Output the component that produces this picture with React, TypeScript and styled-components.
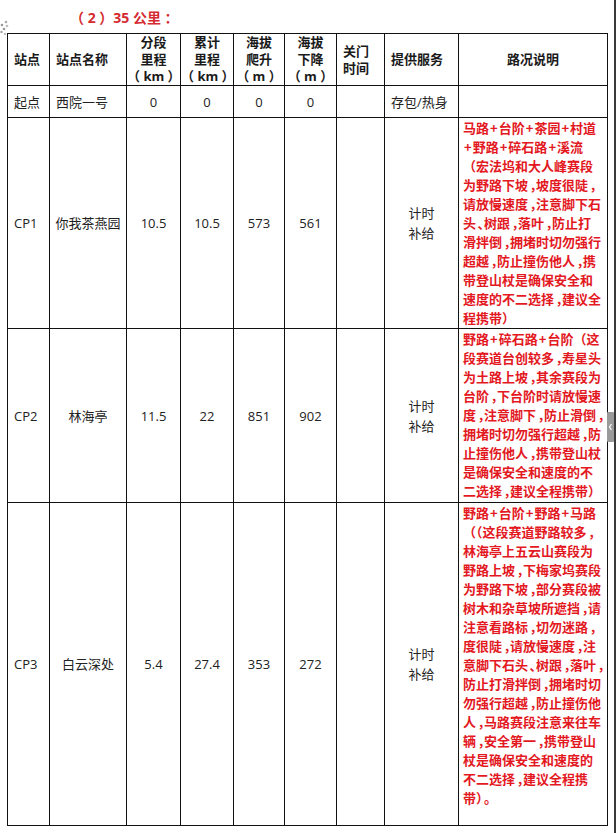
import React from "react";
import styled, { createGlobalStyle } from "styled-components";

const GlobalStyle = createGlobalStyle`
  html, body { margin: 0; padding: 0; background: #fff; }
  body { font-family: "Open Sans", "Noto Sans CJK SC", sans-serif; }
`;

const Page = styled.div`
  position: relative;
  box-sizing: border-box;
  width: 616px;
  height: 833px;
  border-right: 2px solid #3a3a3a;
  overflow: hidden;
`;

const TitleBar = styled.div`
  height: 33px;
  display: flex;
  align-items: center;
  padding-left: 70px;
  font-family: "Open Sans", "Noto Sans CJK SC", sans-serif;
  font-weight: 700;
  font-size: 14px;
  color: #d42a30;
  white-space: pre;
`;

const Dots = styled.svg`
  position: absolute;
  left: 0;
  top: 20px;
`;

const ScrollTab = styled.svg`
  position: absolute;
  right: 0;
  top: 412px;
`;

const Table = styled.table`
  margin-left: 7px;
  border-collapse: collapse;
  table-layout: fixed;
  width: 600px;
  border: 1.5px solid #111;
  font-size: 13px;
  color: #222;
`;

const Row = styled.tr<{ $h: number }>`
  height: ${(p) => p.$h}px;
`;

const Th = styled.th<{ $align?: string }>`
  border: 1px solid #111;
  padding: ${(p) => (p.$align === "left" ? "0 0 0 6px" : "0")};
  text-align: ${(p) => p.$align || "center"};
  vertical-align: middle;
  font-family: "Open Sans", "Noto Sans CJK SC", sans-serif;
  font-weight: 700;
  font-size: 13px;
  line-height: 17px;
  color: #1a1a1a;
`;

const Td = styled.td<{ $align?: string }>`
  border: 1px solid #111;
  padding: ${(p) => (p.$align === "left" ? "0 0 0 6px" : "0")};
  text-align: ${(p) => p.$align || "center"};
  vertical-align: middle;
  font-weight: 400;
  line-height: 20px;
`;

const Desc = styled.td`
  border: 1px solid #111;
  padding: 0 0 0 4px;
  vertical-align: top;
  font-family: "Noto Sans CJK SC", sans-serif;
  font-weight: 700;
  font-size: 13px;
  line-height: 19px;
  color: #e3191f;
`;

const Line = styled.span`
  display: block;
  white-space: nowrap;
`;

const Punct = styled.span`
  font-feature-settings: "halt";
  padding-left: 1.5px;
`;

const Plus = styled.span`
  padding: 0 1px;
`;

const Stack = styled.span`
  display: block;
  white-space: pre;
`;

const cols = [42, 77, 54, 53, 51, 52, 48, 74, 149];

type RowData = {
  id: string;
  name: string;
  seg: string;
  total: string;
  up: string;
  down: string;
  h: number;
  lines: string[];
};

const rows: RowData[] = [
  {
    id: "CP1",
    name: "你我茶燕园",
    seg: "10.5",
    total: "10.5",
    up: "573",
    down: "561",
    h: 211,
    lines: [
      "马路+台阶+茶园+村道",
      "+野路+碎石路+溪流",
      "（宏法坞和大人峰赛段",
      "为野路下坡，坡度很陡，",
      "请放慢速度，注意脚下石",
      "头、树跟，落叶，防止打",
      "滑拌倒，拥堵时切勿强行",
      "超越，防止撞伤他人，携",
      "带登山杖是确保安全和",
      "速度的不二选择，建议全",
      "程携带）",
    ],
  },
  {
    id: "CP2",
    name: "林海亭",
    seg: "11.5",
    total: "22",
    up: "851",
    down: "902",
    h: 174,
    lines: [
      "野路+碎石路+台阶（这",
      "段赛道台创较多，寿星头",
      "为土路上坡，其余赛段为",
      "台阶，下台阶时请放慢速",
      "度，注意脚下，防止滑倒，",
      "拥堵时切勿强行超越，防",
      "止撞伤他人，携带登山杖",
      "是确保安全和速度的不",
      "二选择，建议全程携带）",
    ],
  },
  {
    id: "CP3",
    name: "白云深处",
    seg: "5.4",
    total: "27.4",
    up: "353",
    down: "272",
    h: 323,
    lines: [
      "野路+台阶+野路+马路",
      "（（这段赛道野路较多，",
      "林海亭上五云山赛段为",
      "野路上坡，下梅家坞赛段",
      "为野路下坡，部分赛段被",
      "树木和杂草坡所遮挡，请",
      "注意看路标，切勿迷路，",
      "度很陡，请放慢速度，注",
      "意脚下石头、树跟，落叶，",
      "防止打滑拌倒，拥堵时切",
      "勿强行超越，防止撞伤他",
      "人，马路赛段注意来往车",
      "辆，安全第一，携带登山",
      "杖是确保安全和速度的",
      "不二选择，建议全程携",
      "带）。",
    ],
  },
];

function renderLine(s: string) {
  const out: React.ReactNode[] = [];
  let buf = "";
  const flush = (k: number) => {
    if (buf) {
      out.push(<React.Fragment key={"t" + k}>{buf}</React.Fragment>);
      buf = "";
    }
  };
  Array.from(s).forEach((ch, i) => {
    if (ch === "，" || ch === "、" || ch === "。") {
      flush(i);
      out.push(<Punct key={i}>{ch}</Punct>);
    } else if (ch === "+") {
      flush(i);
      out.push(<Plus key={i}>+</Plus>);
    } else {
      buf += ch;
    }
  });
  flush(s.length + 1);
  return out;
}

export default function App() {
  return (
    <>
      <GlobalStyle />
      <Page lang="zh-CN">
        <Dots width="10" height="18" viewBox="0 0 10 18">
          <circle cx="6" cy="2" r="1.3" fill="#aaa" />
          <circle cx="2" cy="5" r="1.3" fill="#999" />
          <circle cx="7" cy="6" r="1.3" fill="#bbb" />
          <circle cx="4" cy="9" r="1.3" fill="#999" />
          <circle cx="1.5" cy="12" r="1.3" fill="#aaa" />
          <circle cx="5" cy="14" r="1.2" fill="#bbb" />
        </Dots>
        <TitleBar>{"（ 2 ）35 公里 ："}</TitleBar>
        <Table>
          <colgroup>
            {cols.map((w, i) => (
              <col key={i} style={{ width: w }} />
            ))}
          </colgroup>
          <thead>
            <Row $h={52}>
              <Th $align="left">站点</Th>
              <Th $align="left">站点名称</Th>
              <Th>
                <Stack>分段</Stack>
                <Stack>里程</Stack>
                <Stack>{"（ km ）"}</Stack>
              </Th>
              <Th>
                <Stack>累计</Stack>
                <Stack>里程</Stack>
                <Stack>{"（ km ）"}</Stack>
              </Th>
              <Th>
                <Stack>海拔</Stack>
                <Stack>爬升</Stack>
                <Stack>{"（ m ）"}</Stack>
              </Th>
              <Th>
                <Stack>海拔</Stack>
                <Stack>下降</Stack>
                <Stack>{"（ m ）"}</Stack>
              </Th>
              <Th $align="left">
                <Stack>关门</Stack>
                <Stack>时间</Stack>
              </Th>
              <Th $align="left">提供服务</Th>
              <Th>路况说明</Th>
            </Row>
          </thead>
          <tbody>
            <Row $h={32}>
              <Td $align="left">起点</Td>
              <Td $align="left">西院一号</Td>
              <Td>0</Td>
              <Td>0</Td>
              <Td>0</Td>
              <Td>0</Td>
              <Td />
              <Td $align="left">存包/热身</Td>
              <Td />
            </Row>
            {rows.map((r) => (
              <Row key={r.id} $h={r.h}>
                <Td $align="left">{r.id}</Td>
                <Td>{r.name}</Td>
                <Td>{r.seg}</Td>
                <Td>{r.total}</Td>
                <Td>{r.up}</Td>
                <Td>{r.down}</Td>
                <Td />
                <Td>
                  <Stack>计时</Stack>
                  <Stack>补给</Stack>
                </Td>
                <Desc>
                  {r.lines.map((l, i) => (
                    <Line key={i}>{renderLine(l)}</Line>
                  ))}
                </Desc>
              </Row>
            ))}
          </tbody>
        </Table>
        <ScrollTab width="7" height="30" viewBox="0 0 7 30">
          <rect x="0" y="0" width="7" height="30" rx="1" fill="#9a9a9a" />
          <path d="M4.5 12 L2.5 15 L4.5 18" stroke="#fff" strokeWidth="1.2" fill="none" />
        </ScrollTab>
      </Page>
    </>
  );
}
